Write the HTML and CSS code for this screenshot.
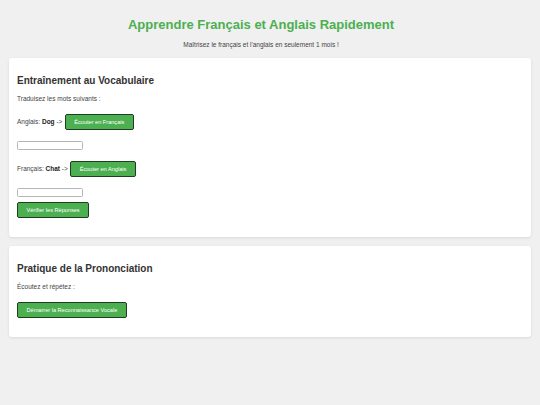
FILE: index.html
```html
<!DOCTYPE html>
<html lang="fr">
<head>
<meta charset="utf-8">
<title>Apprendre Français et Anglais Rapidement</title>
<link rel="stylesheet" href="styles.css">
</head>
<body>
<header class="header">
  <h1 class="title">Apprendre Français et Anglais Rapidement</h1>
  <p class="subtitle">Maîtrisez le français et l'anglais en seulement 1 mois !</p>
</header>

<section class="card">
  <h2 class="card-title">Entraînement au Vocabulaire</h2>
  <p class="text">Traduisez les mots suivants :</p>
  <div class="word-row">
    <span class="text">Anglais: <strong>Dog</strong> -&gt;</span>
    <button class="btn btn-inline">Écouter en Français</button>
  </div>
  <input class="answer" type="text">
  <div class="word-row word-row-next">
    <span class="text">Français: <strong>Chat</strong> -&gt;</span>
    <button class="btn btn-inline">Écouter en Anglais</button>
  </div>
  <input class="answer" type="text">
  <button class="btn btn-block">Vérifier les Réponses</button>
</section>

<section class="card">
  <h2 class="card-title">Pratique de la Prononciation</h2>
  <p class="text">Écoutez et répétez :</p>
  <div class="word-row">
    <button class="btn">Démarrer la Reconnaissance Vocale</button>
  </div>
</section>
</body>
</html>
```

FILE: styles.css
```css
html, body {
  margin: 0;
  padding: 0;
}
body {
  background: #f0f0f0;
  font-family: "Liberation Sans", Arial, sans-serif;
  font-size: 6.5px;
  color: #333;
  padding: 8px 9px;
}
.header {
  text-align: center;
  padding-right: 18px;
}
.title {
  font-size: 13px;
  line-height: 15px;
  font-weight: bold;
  color: #4caf50;
  margin: 8.5px 0 0;
}
.subtitle {
  font-size: 6.5px;
  line-height: 8px;
  color: #444;
  margin: 9.5px 0 0;
}
.card {
  background: #fff;
  border-radius: 3px;
  box-shadow: 0 1px 3px rgba(0, 0, 0, 0.1);
  padding: 8px 8px 19px;
  margin-top: 9px;
}
.card-title {
  font-size: 10px;
  line-height: 12px;
  font-weight: bold;
  color: #333;
  margin: 9.4px 0 0;
}
.text {
  font-size: 6.5px;
  line-height: 8px;
  color: #444;
  margin: 7.3px 0 0;
}
.text strong {
  color: #222;
}
.word-row {
  display: flex;
  align-items: center;
  margin-top: 11.3px;
}
.word-row .text {
  margin: 0;
}
.word-row-next {
  margin-top: 10.5px;
}
.btn {
  font-family: "Liberation Sans", Arial, sans-serif;
  font-size: 5.6px;
  line-height: 6px;
  height: 16px;
  box-sizing: border-box;
  padding: 0 8.5px;
  background: #4caf50;
  color: #fff;
  border: 1px solid #1f3d20;
  border-radius: 2px;
  cursor: pointer;
}
.btn-inline {
  margin-left: 2.4px;
}
.btn-block {
  display: block;
  margin-top: 5px;
}
.answer {
  display: block;
  box-sizing: border-box;
  width: 66px;
  height: 9px;
  margin: 11.5px 0 0;
  padding: 0;
  border: 1px solid #b5b5b5;
  border-radius: 1.5px;
  background: #fff;
}
.answer + .btn-block {
  margin-top: 5px;
}
.word-row-next + .answer {
  margin-top: 11px;
}
```
